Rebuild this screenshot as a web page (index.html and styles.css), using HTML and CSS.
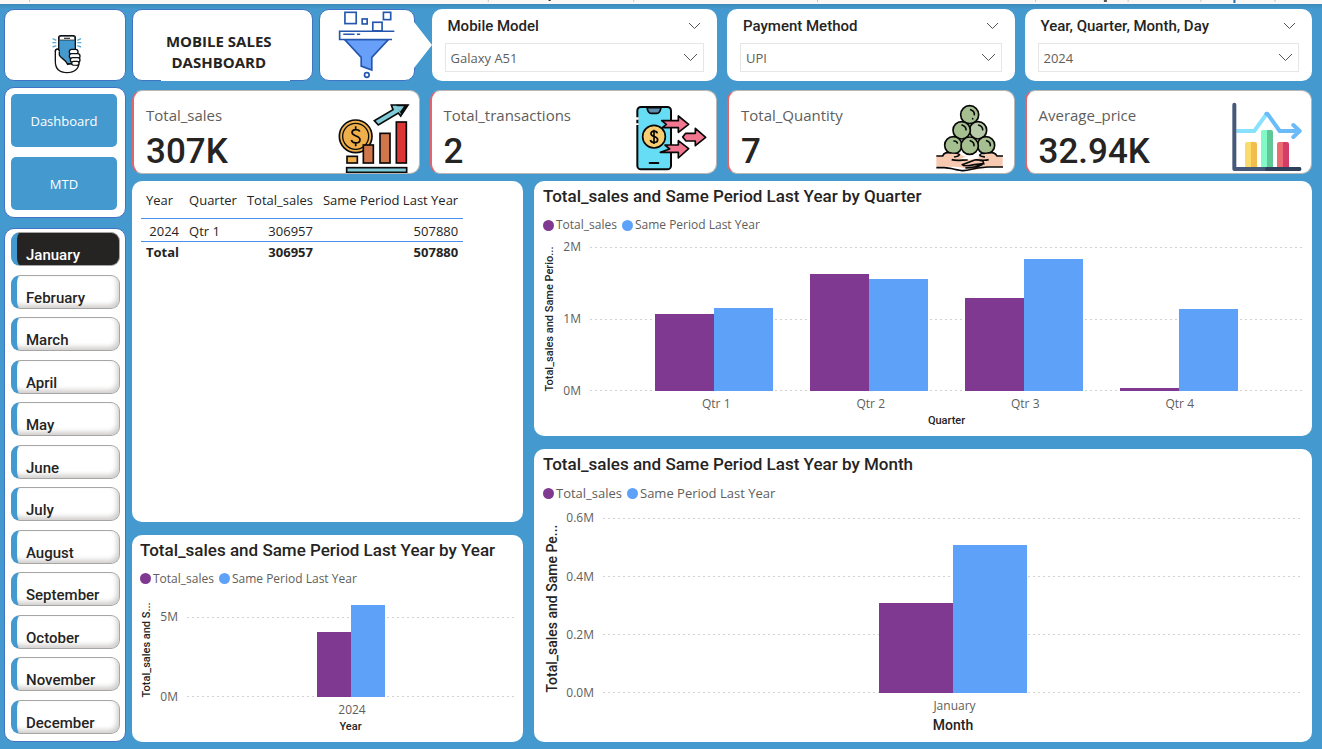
FILE: index.html
```html
<!DOCTYPE html>
<html lang="en">
<head>
<meta charset="utf-8">
<title>Mobile Sales Dashboard</title>
<link rel="stylesheet" href="styles.css">
</head>
<body>
<svg class="strip" aria-hidden="true">
  <g class="ticks">
    <rect x="2.2%" width="1" height="2"/><rect x="36.9%" width="1" height="2"/><rect x="47.9%" width="1" height="2"/>
    <rect x="61.8%" width="1" height="2"/><rect x="78.3%" width="1" height="2"/><rect x="85.3%" width="1" height="2"/>
    <rect x="90.8%" width="1" height="2"/><rect x="96.4%" width="1" height="2"/>
  </g>
  <rect x="41.5%" width="2" height="1" fill="#252423"/><rect x="83.5%" width="3" height="2" fill="#555"/><rect x="93.3%" width="2" height="3" fill="#2f6f9f"/>
</svg>
<div class="report">
  <aside class="sidebar">
    <div class="tile logo">
      <svg width="30" height="40" viewBox="156 104 90 120" role="img" aria-label="Phone in hand">
        <g stroke="#5aa9d6" stroke-width="4"><path d="M158 118l11 5M157 130h12M158 143l11-4M243 118l-11 5M244 130h-12M243 143l-11-4"/></g>
        <path d="M166 157c0-10 12-10 12-1v38h30l28-4c2 17-12 30-35 30-27 0-35-17-35-34z" fill="#fff" stroke="#111" stroke-width="4"/>
        <rect x="176" y="109" width="50" height="84" rx="6" fill="#4499ce" stroke="#111" stroke-width="4"/>
        <path d="M178 122v-6q0-5 5-5h36q5 0 5 5v6z" fill="#fff" stroke="#111" stroke-width="2"/>
        <path d="M192 117h18" stroke="#444" stroke-width="4"/>
        <path d="M178 160c0 20 22 17 25 38l-14 14c-16-6-22-20-21-36V157c0-9 10-9 10 3z" fill="#fff"/>
        <path d="M178 157v10c4 12 20 12 26 30M166 157c0-10 12-10 12-1" fill="none" stroke="#111" stroke-width="4"/>
        <g fill="#fff" stroke="#111" stroke-width="4"><rect x="208" y="150" width="26" height="15" rx="7"/><rect x="208" y="163" width="32" height="15" rx="7"/><rect x="211" y="175" width="29" height="14" rx="7"/><rect x="215" y="186" width="22" height="12" rx="6"/></g>
        <path d="M203 199h26c-6 12-15 18-28 18-8 0-14-2-20-7z" fill="#fff"/>
      </svg>
    </div>
    <nav class="tile pages">
      <button type="button">Dashboard</button>
      <button type="button">MTD</button>
    </nav>
    <div class="tile months" role="group" aria-label="Month">
      <button type="button" class="selected" aria-pressed="true">January</button>
      <button type="button">February</button>
      <button type="button">March</button>
      <button type="button">April</button>
      <button type="button">May</button>
      <button type="button">June</button>
      <button type="button">July</button>
      <button type="button">August</button>
      <button type="button">September</button>
      <button type="button">October</button>
      <button type="button">November</button>
      <button type="button">December</button>
    </div>
  </aside>

  <main class="content">
    <header class="four top">
      <div class="heading">
        <div class="tile name"><h1>MOBILE SALES DASHBOARD</h1></div>
        <div class="tile filter">
          <svg width="59" height="69" viewBox="1012 32 176 208" role="img" aria-label="Filter">
            <g fill="#fff" stroke="#2456ad" stroke-width="5">
              <rect x="1035" y="39" width="34" height="34"/><rect x="1087" y="59" width="15" height="15"/><rect x="1151" y="39" width="22" height="22"/><rect x="1119" y="69" width="28" height="26"/>
              <path d="M1034 121h132l-50 54v38l-32-12v-26z" fill="#689ff8"/>
              <path d="M1184 96h-165v25h158"/><path d="M1030 105h34M1071 105h10"/>
              <circle cx="1101" cy="228" r="7"/>
            </g>
          </svg>
          <svg class="arrow" width="18" height="46" viewBox="0 0 18 46" aria-hidden="true"><path d="M0 0L18 23 0 46z" fill="#fff"/></svg>
        </div>
      </div>
      <section class="slicer">
        <div class="slicer-head"><label for="model">Mobile Model</label><button type="button" aria-label="Model options"><svg width="13" height="8" viewBox="0 0 13 8"><path d="M1 1l5.500 5.500L12 1"/></svg></button></div>
        <div class="pick"><select id="model"><option>Galaxy A51</option></select><svg width="15" height="9" viewBox="0 0 15 9"><path d="M1 1l6.500 6.500L14 1"/></svg></div>
      </section>
      <section class="slicer">
        <div class="slicer-head"><label for="pay">Payment Method</label><button type="button" aria-label="Payment options"><svg width="13" height="8" viewBox="0 0 13 8"><path d="M1 1l5.500 5.500L12 1"/></svg></button></div>
        <div class="pick"><select id="pay"><option>UPI</option></select><svg width="15" height="9" viewBox="0 0 15 9"><path d="M1 1l6.500 6.500L14 1"/></svg></div>
      </section>
      <section class="slicer">
        <div class="slicer-head"><label for="date">Year, Quarter, Month, Day</label><button type="button" aria-label="Date options"><svg width="13" height="8" viewBox="0 0 13 8"><path d="M1 1l5.500 5.500L12 1"/></svg></button></div>
        <div class="pick"><select id="date"><option>2024</option></select><svg width="15" height="9" viewBox="0 0 15 9"><path d="M1 1l6.500 6.500L14 1"/></svg></div>
      </section>
    </header>

    <section class="four kpis">
      <article class="kpi">
        <div><h2>Total_sales</h2><p>307K</p></div>
        <svg width="72" height="72" viewBox="38 33 216 216" aria-hidden="true">
          <g stroke="#0b0b0b" stroke-width="5">
            <circle cx="91" cy="139" r="49" fill="#efb04b"/><circle cx="91" cy="139" r="39" fill="#efb04b" stroke-width="4"/>
            <path d="M103 125c-2-8-22-9-23 2 0 14 24 8 24 22 0 12-23 13-26 1M91 109v8M91 160v9" fill="none" stroke-width="5"/>
            <path d="M147 92l56-33-5-14h50l-22 33-7-9-60 36z" fill="#7fcbd8"/>
            <path d="M213 44h35l-20 30z" fill="#0b0b0b" stroke="none"/><path d="M212 49h24l-12 16z" fill="#7fcbd8" stroke="none"/>
            <rect x="65" y="199" width="31" height="20" fill="#efb04b"/><rect x="114" y="165" width="30" height="54" fill="#cf774b"/><rect x="164" y="130" width="30" height="89" fill="#cf774b"/><rect x="213" y="96" width="30" height="123" fill="#dc3735"/>
            <rect x="64" y="233" width="180" height="14" fill="#7fcbd8"/>
          </g>
        </svg>
      </article>
      <article class="kpi">
        <div><h2>Total_transactions</h2><p>2</p></div>
        <svg width="72" height="72" viewBox="44 33 216 216" aria-hidden="true">
          <g stroke="#070707" stroke-width="6" stroke-linejoin="round">
            <rect x="51" y="51" width="101" height="187" rx="11" fill="#66ddf4"/>
            <path d="M80 53h42c-2 10-5 17-12 17H92c-7 0-10-7-12-17z" fill="#5c8eb0" stroke-width="5"/>
            <path d="M51 82v7M51 100v5" stroke="#fff" stroke-width="8"/>
            <path d="M88 219h26" stroke-linecap="round"/>
            <circle cx="101" cy="140" r="34" fill="#f8cc70" stroke-width="5"/>
            <path d="M111 130c-2-9-19-9-19 1 0 11 20 6 20 18 0 11-20 11-22 1M101 119v43" fill="none" stroke-width="5"/>
            <path d="M124 92l14 11-12 10h48v14l31-24-31-25v14z" fill="#f27891" stroke-width="5"/>
            <path d="M134 165l14 12-28 10h54v17l31-28-31-24v13z" fill="#f27891" stroke-width="5"/>
            <path d="M196 130h29v-15l31 27-31 25v-14h-28l-10-12z" fill="#f27891" stroke-width="5"/>
          </g>
        </svg>
      </article>
      <article class="kpi">
        <div><h2>Total_Quantity</h2><p>7</p></div>
        <svg width="72" height="72" viewBox="36 33 216 216" aria-hidden="true">
          <g fill="#a5bf90" stroke="#080808" stroke-width="5">
            <circle cx="146" cy="74" r="27"/><circle cx="171" cy="121" r="26" fill="#b7cba9"/><circle cx="122" cy="121" r="26"/><circle cx="97" cy="166" r="26"/><circle cx="195" cy="166" r="26"/>
          </g>
          <path d="M46 197h19c5-12 16-10 28-9l24 2c4 6 8 8 15 9l24 5 26-7 24-11 20 9 19 2v34h-38l-35 7c-15 4-24 2-38-3l-28-5H46z" fill="#f7c9b1"/>
          <path d="M132 200l-16 8c12 0 23 1 30 1l30-4-14-8z" fill="#fff"/>
          <g fill="none" stroke="#080808" stroke-width="5">
            <path d="M46 198h19c4-13 16-10 27-9 10 0 20 0 23 5-1 5-6 6-16 7M246 198h-18c-6-13-18-10-29-9-10 0-20 0-23 6 2 5 7 5 16 6M92 209c17 5 34 0 48 1M203 209c-14 4-26 0-42 1l-37 14c3 6 17 4 36 0l28-3c-3-8 1-9-12-10M186 220c-3 11-36 13-53 14M46 233h21c20-1 42 9 60 9 15 0 28-6 43-8l30-3h46"/>
          </g>
          <circle cx="146" cy="167" r="26" fill="#a5bf90" stroke="#080808" stroke-width="5"/>
          <path d="M149 59q12 4 11 15M123 105q12 4 12 14M173 105q12 4 12 14M99 153q8 0 10 6M148 152q12 4 11 15M197 152q12 4 11 15M155 86v1" fill="none" stroke="#080808" stroke-width="5" stroke-linecap="round"/>
        </svg>
      </article>
      <article class="kpi">
        <div><h2>Average_price</h2><p>32.94K</p></div>
        <svg width="72" height="72" viewBox="60 33 216 216" aria-hidden="true">
          <path d="M105 232v-70q0-6 6-6h12v76z" fill="#fbdc6a"/><path d="M123 232v-76h12q6 0 6 6v70z" fill="#f3bd4d"/>
          <path d="M153 232V126q0-6 6-6h12v112z" fill="#82fac6"/><path d="M171 232V120h12q6 0 6 6v106z" fill="#60c897"/>
          <path d="M201 232v-70q0-6 6-6h12v76z" fill="#ec6a72"/><path d="M219 232v-76h12q6 0 6 6v70z" fill="#d63c68"/>
          <path d="M79 123h54l38-53" fill="none" stroke="#88e2fd" stroke-width="12"/>
          <path d="M169 71l3 0 37 52h60M250 105l19 18-19 18" fill="none" stroke="#6bbbf9" stroke-width="12" stroke-linejoin="round" stroke-linecap="round"/>
          <path d="M73 44v193h195" fill="none" stroke="#475978" stroke-width="12" stroke-linejoin="round" stroke-linecap="round"/><path d="M171 237h97" stroke="#2f405d" stroke-width="12" stroke-linecap="round"/>
        </svg>
      </article>
    </section>

    <div class="panels">
      <div class="column left">
        <section class="panel">
          <table>
            <thead><tr><th class="start">Year</th><th class="start">Quarter</th><th>Total_sales</th><th>Same Period Last Year</th></tr></thead>
            <tbody><tr><td>2024</td><td class="start">Qtr 1</td><td>306957</td><td>507880</td></tr></tbody>
            <tfoot><tr><td>Total</td><td></td><td>306957</td><td>507880</td></tr></tfoot>
          </table>
        </section>
        <section class="panel chart by-year">
          <h2>Total_sales and Same Period Last Year by Year</h2>
          <ul class="legend"><li class="sales">Total_sales</li><li class="last">Same Period Last Year</li></ul>
          <div class="axes">
            <div class="y-title">Total_sales and S...</div>
            <div class="y-labels"><span>5M</span><span>0M</span></div>
            <div class="plot">
              <div class="lines"><i></i><i></i></div>
              <div class="groups"><div class="group"><b class="sales" style="height:81%"></b><b class="last" style="height:114%"></b></div></div>
            </div>
            <div class="x-labels"><span>2024</span></div>
            <div class="x-title">Year</div>
          </div>
        </section>
      </div>
      <div class="column right">
        <section class="panel chart by-quarter">
          <h2>Total_sales and Same Period Last Year by Quarter</h2>
          <ul class="legend"><li class="sales">Total_sales</li><li class="last">Same Period Last Year</li></ul>
          <div class="axes">
            <div class="y-title">Total_sales and Same Perio...</div>
            <div class="y-labels"><span>2M</span><span>1M</span><span>0M</span></div>
            <div class="plot">
              <div class="lines"><i></i><i></i><i></i></div>
              <div class="groups">
                <div class="group"><b class="sales" style="height:53.5%"></b><b class="last" style="height:58%"></b></div>
                <div class="group"><b class="sales" style="height:81.2%"></b><b class="last" style="height:78%"></b></div>
                <div class="group"><b class="sales" style="height:64.5%"></b><b class="last" style="height:91.6%"></b></div>
                <div class="group"><b class="sales" style="height:2.5%"></b><b class="last" style="height:57%"></b></div>
              </div>
            </div>
            <div class="x-labels"><span>Qtr 1</span><span>Qtr 2</span><span>Qtr 3</span><span>Qtr 4</span></div>
            <div class="x-title">Quarter</div>
          </div>
        </section>
        <section class="panel chart by-month">
          <h2>Total_sales and Same Period Last Year by Month</h2>
          <ul class="legend"><li class="sales">Total_sales</li><li class="last">Same Period Last Year</li></ul>
          <div class="axes">
            <div class="y-title">Total_sales and Same Pe...</div>
            <div class="y-labels"><span>0.6M</span><span>0.4M</span><span>0.2M</span><span>0.0M</span></div>
            <div class="plot">
              <div class="lines"><i></i><i></i><i></i><i></i></div>
              <div class="groups"><div class="group"><b class="sales" style="height:51.4%"></b><b class="last" style="height:85%"></b></div></div>
            </div>
            <div class="x-labels"><span>January</span></div>
            <div class="x-title">Month</div>
          </div>
        </section>
      </div>
    </div>
  </main>
</div>
</body>
</html>
```

FILE: styles.css
```css
:root {
  --blue: #4499ce;
  --ink: #252423;
  --grey: #605e5c;
  --sales: #803990;
  --last: #5ea1f9;
  --ui: "Open Sans", "Noto Sans", sans-serif;
  --din: Roboto, "Liberation Sans", sans-serif;
}
* { box-sizing: border-box; }
body {
  margin: 0;
  min-height: 100vh;
  display: flex;
  flex-direction: column;
  background: var(--blue);
  color: var(--ink);
  font-family: var(--ui);
}
h1, h2, p, ul { margin: 0; padding: 0; }
button, select { font: inherit; color: inherit; cursor: pointer; }

.strip { display: block; width: 100%; height: 4px; background: #f9f8f7; }
.ticks { fill: #c8c6c4; }

.report {
  flex: 1;
  display: grid;
  grid-template-columns: 122px minmax(0, 1fr);
  gap: 6px;
  padding: 5px 10px 7px 4px;
  background: linear-gradient(#3d8aba, var(--blue) 5px);
}
.tile { background: #fff; border: 1px solid #4173c4; border-radius: 10px; }

/* Sidebar */
.sidebar { display: flex; flex-direction: column; }
.logo { display: flex; justify-content: center; align-items: flex-end; height: 72px; padding: 0 0 6px 4px; }
.pages { display: flex; flex-direction: column; gap: 10px; margin-top: 6px; padding: 6px 8px 7px 6px; }
.pages button {
  height: 53px;
  border: 0;
  border-radius: 5px;
  background: var(--blue);
  color: #fff;
  font-size: 13px;
}
.months {
  flex: 1;
  display: flex;
  flex-direction: column;
  justify-content: space-between;
  gap: 4px;
  margin-top: 10px;
  padding: 3px 5px 7px 6px;
}
.months button {
  height: 34px;
  padding: 11px 0 0 9px;
  border: 1px solid #a8a6a4;
  border-left: 6px solid var(--blue);
  border-radius: 9px;
  background: #fff;
  box-shadow: inset -2px -3px 5px #cfcdcc;
  font: 500 15px/22px var(--din);
  text-align: left;
}
.months .selected { background: var(--ink); color: #fff; box-shadow: none; }

/* Header row */
.content { display: flex; flex-direction: column; min-width: 0; }
.four { display: grid; grid-template-columns: repeat(4, minmax(0, 1fr)); gap: 10px; }
.top { height: 72px; }
.heading { display: grid; grid-template-columns: minmax(0, 1fr) 96px; gap: 6px; padding-right: 5px; }
.name { position: relative; display: flex; align-items: center; justify-content: center; padding: 14px 7px 0 0; }
.name::after {
  content: "";
  position: absolute;
  right: 22px;
  bottom: -1px;
  left: 28px;
  height: 2px;
  background: #fff;
}
.name h1 { width: 130px; font-size: 15px; line-height: 21px; text-align: center; }
.filter { position: relative; display: flex; justify-content: center; }
.arrow { position: absolute; top: 12px; left: 100%; }

.slicer { padding: 7px 13px; background: #fff; border-radius: 10px; }
.heading + .slicer { margin-left: 2px; }
.slicer-head { display: flex; justify-content: space-between; align-items: center; height: 20px; padding: 0 3px; font: 500 15px/20px var(--din); }
.slicer-head button { display: flex; padding: 0; border: 0; background: none; }
.slicer path { fill: none; stroke: #555; }
.pick { position: relative; margin-top: 7px; }
.pick select {
  width: 100%;
  height: 29px;
  padding: 0 5px;
  border: 1px solid #e8e6e4;
  background: #fff;
  color: var(--grey);
  font-size: 13px;
  appearance: none;
}
.pick svg { position: absolute; top: 10px; right: 6px; pointer-events: none; }

/* Figures */
.kpis { margin-top: 9px; }
.kpi {
  display: flex;
  justify-content: space-between;
  height: 84px;
  padding: 12px 9px 0 12px;
  background: #fff;
  border: 1px solid #b9b6b3;
  border-left: 2px solid #e0666c;
  border-radius: 10px;
}
.kpi svg { flex: none; align-self: flex-end; }
.kpi h2 { color: var(--grey); font-size: 15px; font-weight: 400; line-height: 24px; }
.kpi p { font: 500 35px/50px var(--din); }

/* Panels */
.panels { flex: 1; display: grid; grid-template-columns: minmax(0, 391fr) minmax(0, 778fr); gap: 11px; margin-top: 7px; }
.column { display: grid; gap: 13px; }
.left { grid-template-rows: 340fr 207fr; }
.right { grid-template-rows: 255fr 292fr; }
.panel { background: #fff; border-radius: 10px; }

table { margin: 4px 9px; border-collapse: collapse; font-size: 13px; line-height: 20px; white-space: nowrap; }
th, td { padding: 0 5px; text-align: right; }
th { height: 33px; padding-bottom: 2px; font-weight: 400; border-bottom: 1px solid #4a90f0; }
td { height: 22px; }
tbody td { padding-top: 2px; }
.start { text-align: left; }
tfoot td { border-top: 1px solid #4a90f0; font-weight: 700; }

.chart { display: flex; flex-direction: column; padding: 5px 9px 8px 8px; }
.right .chart { padding-left: 9px; }
.chart h2 { font: 500 17px/20px var(--din); }
.legend { display: flex; gap: 5px; margin: 11px 0 14px; color: var(--grey); font-size: 12px; line-height: 16px; list-style: none; }
.legend li { display: flex; align-items: center; gap: 2px; }
.legend li::before { content: ""; width: 11px; height: 11px; border-radius: 50%; background: var(--sales); }
.legend .last::before { background: var(--last); }
.axes {
  flex: 1;
  display: grid;
  grid-template-columns: 14px 24px minmax(0, 1fr);
  grid-template-rows: minmax(78px, 1fr) auto auto;
}
.y-title {
  contain: size;
  writing-mode: vertical-rl;
  transform: rotate(180deg);
  font: 500 11px/14px var(--din);
  white-space: nowrap;
}
.y-labels {
  display: flex;
  flex-direction: column;
  justify-content: space-between;
  margin: -8px 0;
  color: var(--grey);
  font-size: 12px;
  line-height: 16px;
  text-align: right;
}
.plot { display: grid; margin-left: 9px; }
.lines, .groups { grid-area: 1 / 1; }
.lines { display: flex; flex-direction: column; justify-content: space-between; }
.lines i { height: 1px; background: repeating-linear-gradient(90deg, #d4d2d0 0 2px, transparent 2px 5px); }
.groups, .x-labels { display: flex; }
.group { flex: 1; display: flex; align-items: flex-end; justify-content: center; }
.group b { width: 38%; background: var(--sales); }
.group .last { background: var(--last); }
.x-labels { grid-column: 3; margin: 5px 0 0 12px; color: var(--grey); font-size: 12px; line-height: 16px; }
.x-labels span { flex: 1; text-align: center; }
.x-title { grid-column: 3; margin: 2px 0 0 9px; font: 500 11px/14px var(--din); text-align: center; }

.by-quarter .groups, .by-quarter .x-labels { padding: 0 46px; }
.by-year .legend { margin-bottom: 30px; }
.by-year .group b { width: 34px; }
.by-month .legend { margin-bottom: 17px; font-size: 13px; }
.by-month .axes { grid-template-columns: 18px 33px minmax(0, 1fr); }
.by-month .y-title { font-size: 14px; line-height: 18px; }
.by-month .x-title { font-size: 14px; line-height: 18px; }
.by-month .group b { width: 74px; }
```
